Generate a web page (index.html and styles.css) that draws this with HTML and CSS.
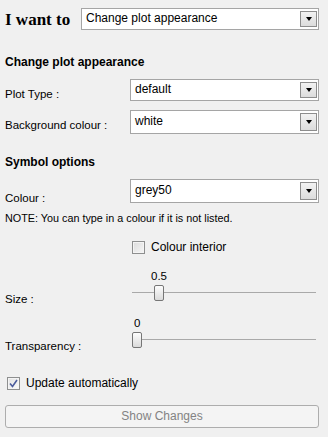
FILE: index.html
```html
<!DOCTYPE html>
<html lang="en">
<head>
    <meta charset="UTF-8">
    <title>Plot options</title>
    <link rel="stylesheet" href="styles.css">
</head>
<body>
    <div class="panel">
        <div class="top">
            <span class="want">I want to</span>
            <div class="combo wide">
                <span class="value">Change plot appearance</span>
                <span class="drop"><i></i></span>
            </div>
        </div>

        <h3 class="head first">Change plot appearance</h3>

        <div class="row r-plot">
            <span class="label">Plot Type :</span>
            <div class="combo">
                <span class="value">default</span>
                <span class="drop"><i></i></span>
            </div>
        </div>

        <div class="row r-bg">
            <span class="label">Background colour :</span>
            <div class="combo">
                <span class="value">white</span>
                <span class="drop"><i></i></span>
            </div>
        </div>

        <h3 class="head second">Symbol options</h3>

        <div class="row r-col">
            <span class="label">Colour :</span>
            <div class="combo">
                <span class="value">grey50</span>
                <span class="drop"><i></i></span>
            </div>
        </div>

        <p class="note">NOTE: You can type in a colour if it is not listed.</p>

        <label class="check interior">
            <span class="box"></span>
            <span>Colour interior</span>
        </label>

        <div class="slide r-size">
            <span class="label">Size :</span>
            <div class="track">
                <span class="num" style="left: 19px;">0.5</span>
                <span class="line"></span>
                <span class="handle" style="left: 22px;"></span>
            </div>
        </div>

        <div class="slide r-alpha">
            <span class="label">Transparency :</span>
            <div class="track">
                <span class="num" style="left: 2px;">0</span>
                <span class="line"></span>
                <span class="handle" style="left: 0px;"></span>
            </div>
        </div>

        <label class="check update">
            <span class="box on">
                <svg width="9" height="9" viewBox="0 0 9 9"><path d="M1 4.5 L3.5 7.5 L8 1" fill="none" stroke="#4c5c9c" stroke-width="1.6"/></svg>
            </span>
            <span>Update automatically</span>
        </label>

        <button class="show" disabled>Show Changes</button>
    </div>
</body>
</html>
```

FILE: styles.css
```css
body {
    margin: 0;
    background: #f0f0f0;
    font-family: "Liberation Sans", Arial, sans-serif;
    font-size: 11px;
    color: #000;
}
.panel {
    width: 328px;
    height: 437px;
    padding: 8px 9px 0 5px;
    box-sizing: border-box;
}
.top {
    display: flex;
    align-items: center;
    height: 22px;
}
.want {
    width: 76px;
    font-family: "Liberation Serif", "Times New Roman", serif;
    font-weight: bold;
    font-size: 17px;
    padding-top: 1px;
}
.combo {
    flex: 1;
    display: flex;
    align-items: center;
    height: 100%;
    box-sizing: border-box;
    background: #fff;
    border: 1px solid #a5a5a5;
}
.combo .value {
    flex: 1;
    padding-left: 4px;
    font-size: 12px;
    padding-bottom: 2px;
}
.drop {
    width: 17px;
    height: calc(100% - 4px);
    margin-right: 1px;
    box-sizing: border-box;
    border: 1px solid #8d8d8d;
    background: linear-gradient(#f2f2f2, #dcdcdc);
    display: flex;
    align-items: center;
    justify-content: center;
}
.drop i {
    width: 0;
    height: 0;
    border-left: 3.5px solid transparent;
    border-right: 3.5px solid transparent;
    border-top: 4px solid #000;
}
.head {
    margin: 0;
    font-size: 12px;
    font-weight: bold;
    line-height: 14px;
}
.head.first { margin-top: 25px; }
.head.second { margin-top: 21px; }
.row {
    display: flex;
    align-items: flex-end;
}
.row .label {
    width: 125px;
    flex: none;
    line-height: 14px;
    font-size: 11.5px;
}
.r-plot { height: 22px; margin-top: 10px; }
.r-plot .label { margin-bottom: 0; }
.r-bg { height: 24px; margin-top: 9px; }
.r-bg .label { margin-bottom: 2px; }
.r-col { height: 24px; margin-top: 10px; }
.r-col .label { margin-bottom: -2px; }
.note {
    margin: 8px 0 0;
    font-size: 10.8px;
    line-height: 14px;
}
.check {
    display: flex;
    align-items: center;
    gap: 6px;
    font-size: 12px;
    line-height: 14px;
}
.box {
    width: 13px;
    height: 13px;
    box-sizing: border-box;
    border: 1px solid #8e8f8f;
    background: linear-gradient(135deg, #dcdcdc, #f6f6f6);
    box-shadow: inset 0 0 0 1px #f4f4f4;
    display: flex;
    align-items: center;
    justify-content: center;
}
.box.on { background: linear-gradient(135deg, #e2e2e2, #fbfbfb); }
.interior {
    margin: 15px 0 0 127px;
}
.slide {
    display: flex;
    align-items: flex-end;
    height: 36px;
}
.slide .label {
    width: 127px;
    flex: none;
    font-size: 11.5px;
    line-height: 14px;
}
.r-size { margin-top: 16px; }
.r-alpha { margin-top: 11px; }
.track {
    flex: 1;
    height: 36px;
    position: relative;
    margin-right: 3px;
}
.num {
    position: absolute;
    top: 0;
    font-size: 11.5px;
    line-height: 12px;
}
.line {
    position: absolute;
    left: 0;
    right: 0;
    top: 22px;
    height: 1px;
    background: #a9a9a9;
}
.handle {
    position: absolute;
    top: 15px;
    width: 10px;
    height: 16px;
    box-sizing: border-box;
    border: 1px solid #767676;
    border-radius: 2px;
    background: linear-gradient(#fdfdfd, #dadada);
}
.update {
    margin: 23px 0 0 2px;
}
.show {
    display: block;
    width: 100%;
    height: 23px;
    margin-top: 15px;
    box-sizing: border-box;
    border: 1px solid #adadad;
    border-radius: 3px;
    background: #f4f4f4;
    color: #838383;
    font-family: "Liberation Sans", Arial, sans-serif;
    font-size: 12px;
    padding: 0 0 1px;
}
```
